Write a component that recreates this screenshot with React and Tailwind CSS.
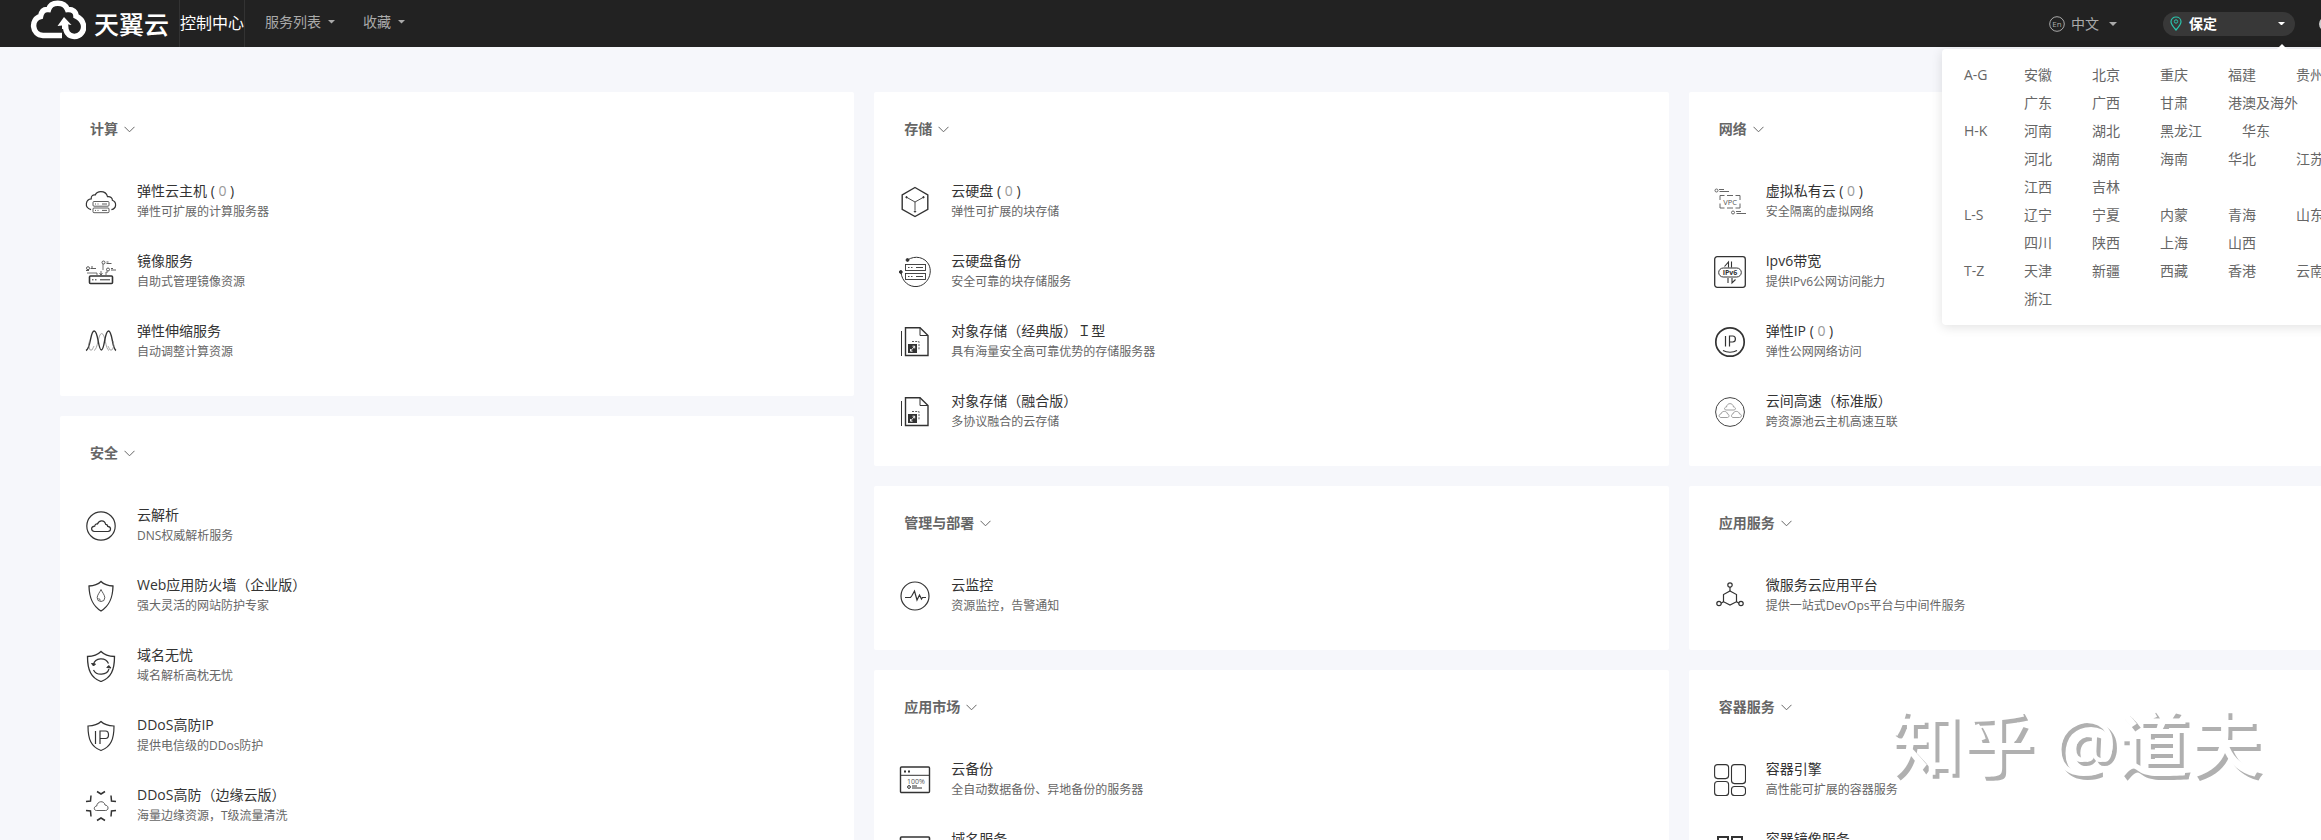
// src/App.jsx
import React from 'react';

const icons = {
  cloudServer: (
    <>
      <path d="M6 23.6C2.6 22.6 1 20 1.4 17.4c.4-2.6 2.4-4.3 4.8-4.5C6 9.800 8 8.600 10.200 9c1-2.200 3.200-3.300 5.600-3.300 3.600 0 6 2.200 6.700 5 3 -.4 5 1.300 4.900 3.600 2.200.9 3.300 2.600 3.200 4.800-.1 2.200-1.600 4-4.200 4.500" strokeWidth="1.200" />
      <g strokeWidth="0.800">
        <rect x="8" y="15.500" width="16" height="4.700" rx="1" />
        <rect x="8" y="22" width="16" height="4.700" rx="1" />
        <path d="M10 18h1M12.500 18h1M17 18h5M10 24.400h1M12.500 24.400h1M17 24.400h5" />
      </g>
    </>
  ),
  mirror: (
    <>
      <rect x="4.500" y="20" width="23" height="7.500" rx="1" strokeWidth="1.600" />
      <path d="M7 23.800h1.500M10 23.800h1.500M15 23.800h10" />
      <path d="M2 17h10v2M18 8v6M16 15v4M21 19v-3h2M14.500 17l1.500 2 1.500-2" strokeWidth="0.700" />
      <g strokeWidth="0.800">
        <circle cx="3" cy="12.200" r="1.500" />
        <circle cx="18.500" cy="6.500" r="1.500" />
        <circle cx="23" cy="13.500" r="1.500" />
        <path d="M6 11h2M5.500 12.500h5.500M1 14.500h3M21.500 6h2M21.500 7.500h5M26 12.500h2M26 14h5" />
      </g>
    </>
  ),
  scaling: (
    <>
      <path d="M9 24.500c4-1 4-17 7.700-17s3.700 16 7.300 17" stroke="#999" strokeWidth="0.900" />
      <path d="M1 24.500c5-2 4-19.500 8.200-19.500s3.800 19 7.200 19 3-19 7.100-19 3.300 17.500 7.500 19.500" strokeWidth="1.400" />
      <path d="M4.500 15l-1 4 1.500 5h2l2-4M28 15l1 5-2 4h-2l-2-4" stroke="#888" strokeWidth="0.700" />
    </>
  ),
  dns: (
    <>
      <circle cx="16" cy="16" r="14.200" strokeWidth="1.200" />
      <path d="M9.500 21.500c-3.800-.3-4-5 .2-5.400.3-2 1.700-2.400 2.800-2.100 1.600-4.400 7-4.200 8.200.3 1.500 0 2 .9 2 2.100 4 .5 3.500 4.900.3 5.100z" strokeWidth="1.200" />
    </>
  ),
  waf: (
    <>
      <path d="M16 1.500c3 3 7 4.300 12 4.500-.3 13-4 20-12 25C8 26 4.300 19 4 6c5-.2 9-1.500 12-4.500z" strokeWidth="1.300" />
      <path d="M16 9.500c1 2.500 3.800 5.500 3.800 8.200a3.800 3.800 0 0 1-7.600 0c0-2.700 2.800-5.700 3.800-8.200z" strokeWidth="0.800" />
      <path d="M13.800 18a2.200 2.200 0 0 0 2 2.200" strokeWidth="0.700" />
    </>
  ),
  shieldSync: (
    <>
      <path d="M16 1.500c3 3 8 4.800 13.500 5C29.500 20 26 28 16 31.500 6 28 2.500 20 2.500 6.500 8 6.300 13 4.500 16 1.500z" strokeWidth="1.300" />
      <path d="M8.500 14.500c1.500-7 12-7.500 15-1M24 19c-2 6.500-12.500 7-15.500 1" strokeWidth="1.200" />
      <path d="M6.500 13.500l2 2.500 2-2zM26 18l-2.200-2.500-2 2z" fill="currentColor" />
    </>
  ),
  shieldIp: (
    <>
      <path d="M16 1.500c3 3 8 4.300 13 4.500C29 19 26 27 16 30.500 6 27 3 19 3 6c5-.2 10-1.500 13-4.500z" strokeWidth="1.200" />
      <path d="M10.500 11v13M15 24V11h5.500c4 0 4 7.500 0 7.500H15" strokeWidth="1.200" />
    </>
  ),
  ddosEdge: (
    <>
      <path d="M12 1.500l4 2.500 4-2.500M12 30.500l4-2.500 4 2.500M6 5.500L5.500 11 1 11.500M26 5.500l.5 5.500 4.500.5M6 26.500L5.500 21 1 20.500M26 26.500l.5-5.500 4.500-.5" strokeWidth="1.500" />
      <path d="M11.500 20.500c-3 0-3-4.200.2-4.500.5-5 7.300-6 8.300-1 4 .3 4 5.500.5 5.500z" strokeWidth="0.800" />
    </>
  ),
  cube: (
    <>
      <path d="M16 1.500l12.800 7.300v14.500L16 30.500 3.200 23.300V8.800z" strokeWidth="1.400" />
      <path d="M8 11.500l8 4.500 8-4.500M16 16v8" strokeWidth="0.900" />
      <circle cx="7.500" cy="11.200" r="0.700" fill="currentColor" />
      <circle cx="24.500" cy="11.200" r="0.700" fill="currentColor" />
      <circle cx="16" cy="25.500" r="0.700" fill="currentColor" />
    </>
  ),
  diskBackup: (
    <>
      <path d="M8.500 4C16-1 26 1 30 9c4 9-2 20.500-12 21.500-8 .8-15-5-16-14" strokeWidth="1" />
      <circle cx="8.500" cy="4" r="1.400" fill="currentColor" />
      <circle cx="1.800" cy="16" r="1.400" fill="currentColor" />
      <g strokeWidth="0.900">
        <rect x="6.500" y="8.500" width="20" height="6" />
        <rect x="6.500" y="17.500" width="20" height="6" />
        <path d="M9 11.500h1.500M12 11.500h1.500M17 11.500h7M9 20.500h1.500M12 20.500h1.500M17 20.500h7" />
      </g>
    </>
  ),
  objectFile: (
    <>
      <path d="M6.500 1.800H21l8 7.700v20H6.500z" strokeWidth="1.400" />
      <path d="M21 1.800v7.700h8M2.500 5v25" strokeWidth="1" />
      <rect x="9" y="18" width="9" height="9" fill="currentColor" stroke="none" />
      <path d="M11.500 25l4-4.500M11.500 23v2.200h2M13.500 20.200h2.200v2.200" stroke="#fff" strokeWidth="0.900" />
      <path d="M13 15.500h7v9" strokeDasharray="2 1.200" strokeWidth="0.800" />
    </>
  ),
  monitor: (
    <>
      <circle cx="16" cy="16" r="14" strokeWidth="1.200" />
      <path d="M6 17.500h5.500l1.500-2 2.500-4.500 2.500 9 2.500-5 2 4 1-1.500H27" strokeWidth="1.200" />
    </>
  ),
  cloudBackup: (
    <>
      <rect x="1.500" y="3" width="29" height="25.500" rx="1" strokeWidth="1.400" />
      <path d="M1.500 11.300h29" />
      <path d="M5 7.500h2M9 7.500h2" strokeWidth="1.800" />
      <text x="8" y="19.500" fontSize="7" fill="#555" stroke="none">100%</text>
      <circle cx="10" cy="23" r="1.400" />
      <path d="M13 22h5M13 24h10" />
    </>
  ),
  domain: (
    <>
      <rect x="1.500" y="3" width="29" height="25.500" rx="1" strokeWidth="1.600" />
      <path d="M1.500 11.300h29" />
    </>
  ),
  vpc: (
    <g stroke="#666">
      <path d="M6 14V9.500h4.500M13 9.500h6M21.500 9.500H26V14M6 17.500V22h4.500M13 22h6M21.500 22H26v-4.500" />
      <text x="9.300" y="18.700" fontSize="7.500" fill="#555" stroke="none">VPC</text>
      <circle cx="2.500" cy="4.500" r="1.500" />
      <path d="M5 3.500h5M5.500 5.500H15M22 25.500h5M22.500 27.500H32" />
      <circle cx="19" cy="26.500" r="1.500" />
    </g>
  ),
  ipv6: (
    <>
      <rect x="0.700" y="0.700" width="30.600" height="30.600" rx="2.500" strokeWidth="1.300" />
      <rect x="4.700" y="12" width="22.600" height="9" rx="4.500" />
      <text x="16" y="19.300" fontSize="7" fontWeight="700" textAnchor="middle" fill="currentColor" stroke="none">IPv6</text>
      <path d="M10.500 10.500l4-4.500v5.500M17.500 5.500v6M14 22v5M18 22v5l3.500-3.500" strokeWidth="1.100" />
    </>
  ),
  eip: (
    <>
      <circle cx="16" cy="16" r="14.200" strokeWidth="1.700" />
      <path d="M11.500 10v10.500M15.500 20.500V10h3.200c3.600 0 3.600 6 0 6h-3.200M9 24.500c4 2.300 10 2.300 14 0" strokeWidth="1.200" />
    </>
  ),
  cloudLink: (
    <g stroke="#888">
      <circle cx="16" cy="16" r="14.400" stroke="#444" />
      <path d="M12 14c-2 0-2-3 .5-3 .5-4.500 6.500-4.500 7 0 2.500 0 2.500 3 .5 3zM7 21.500c-2.500 0-2.500-3.500 0-3.500.5-3.500 6-3.500 6.500 0 2 0 2 3.500 0 3.500zM19 21.500c-2 0-2-3.500 0-3.500.5-3.500 6-3.500 6.500 0 2.500 0 2.500 3.500 0 3.500z" strokeWidth="0.800" />
    </g>
  ),
  microservice: (
    <>
      <path d="M16 11l6.500 3.500v7.200L16 25l-6.500-3.300v-7.200z" strokeWidth="1.200" />
      <path d="M16 11V7M9.500 21.700l-2.500 1.500M22.500 21.700l2.500 1.500" strokeWidth="1.200" />
      <circle cx="16" cy="5" r="2.200" strokeWidth="1.200" />
      <circle cx="5" cy="23.500" r="2.200" strokeWidth="1.200" />
      <circle cx="27" cy="23.500" r="2.200" strokeWidth="1.200" />
    </>
  ),
  container: (
    <g strokeWidth="1.100">
      <rect x="0.600" y="0.600" width="14" height="14" rx="3" />
      <rect x="17.500" y="0.600" width="14" height="19" rx="3" />
      <rect x="0.600" y="17.500" width="14" height="14" rx="3" />
      <rect x="17.500" y="22.500" width="14" height="9" rx="3" />
    </g>
  ),
  containerImage: (
    <g strokeWidth="2">
      <rect x="4" y="3" width="10" height="10" />
      <rect x="18" y="3" width="10" height="10" />
      <rect x="4" y="17" width="10" height="10" />
      <rect x="18" y="17" width="10" height="10" />
    </g>
  ),
};

const columns = [
  [
    {
      title: '计算',
      items: [
        { icon: 'cloudServer', name: '弹性云主机', count: 0, desc: '弹性可扩展的计算服务器' },
        { icon: 'mirror', name: '镜像服务', desc: '自助式管理镜像资源' },
        { icon: 'scaling', name: '弹性伸缩服务', desc: '自动调整计算资源' },
      ],
    },
    {
      title: '安全',
      items: [
        { icon: 'dns', name: '云解析', desc: 'DNS权威解析服务' },
        { icon: 'waf', name: 'Web应用防火墙（企业版）', desc: '强大灵活的网站防护专家' },
        { icon: 'shieldSync', name: '域名无忧', desc: '域名解析高枕无忧' },
        { icon: 'shieldIp', name: 'DDoS高防IP', desc: '提供电信级的DDos防护' },
        { icon: 'ddosEdge', name: 'DDoS高防（边缘云版）', desc: '海量边缘资源，T级流量清洗' },
      ],
    },
  ],
  [
    {
      title: '存储',
      items: [
        { icon: 'cube', name: '云硬盘', count: 0, desc: '弹性可扩展的块存储' },
        { icon: 'diskBackup', name: '云硬盘备份', desc: '安全可靠的块存储服务' },
        { icon: 'objectFile', name: '对象存储（经典版）Ｉ型', desc: '具有海量安全高可靠优势的存储服务器' },
        { icon: 'objectFile', name: '对象存储（融合版）', desc: '多协议融合的云存储' },
      ],
    },
    {
      title: '管理与部署',
      items: [{ icon: 'monitor', name: '云监控', desc: '资源监控，告警通知' }],
    },
    {
      title: '应用市场',
      items: [
        { icon: 'cloudBackup', name: '云备份', desc: '全自动数据备份、异地备份的服务器' },
        { icon: 'domain', name: '域名服务' },
      ],
    },
  ],
  [
    {
      title: '网络',
      items: [
        { icon: 'vpc', name: '虚拟私有云', count: 0, desc: '安全隔离的虚拟网络' },
        { icon: 'ipv6', name: 'Ipv6带宽', desc: '提供IPv6公网访问能力' },
        { icon: 'eip', name: '弹性IP', count: 0, desc: '弹性公网网络访问' },
        { icon: 'cloudLink', name: '云间高速（标准版）', desc: '跨资源池云主机高速互联' },
      ],
    },
    {
      title: '应用服务',
      items: [{ icon: 'microservice', name: '微服务云应用平台', desc: '提供一站式DevOps平台与中间件服务' }],
    },
    {
      title: '容器服务',
      items: [
        { icon: 'container', name: '容器引擎', desc: '高性能可扩展的容器服务' },
        { icon: 'containerImage', name: '容器镜像服务' },
      ],
    },
  ],
];

const regions = [
  { label: 'A-G', rows: [['安徽', '北京', '重庆', '福建', '贵州'], ['广东', '广西', '甘肃', '港澳及海外']] },
  { label: 'H-K', rows: [['河南', '湖北', '黑龙江', '华东'], ['河北', '湖南', '海南', '华北', '江苏'], ['江西', '吉林']] },
  { label: 'L-S', rows: [['辽宁', '宁夏', '内蒙', '青海', '山东'], ['四川', '陕西', '上海', '山西']] },
  { label: 'T-Z', rows: [['天津', '新疆', '西藏', '香港', '云南'], ['浙江']] },
];

const Caret = ({ className }) => (
  <svg className={className} viewBox="0 0 8 4" fill="currentColor" aria-hidden="true">
    <path d="M0 0h8L4 4z" />
  </svg>
);

const Logo = () => (
  <a href="#" className="flex items-start gap-2 text-white">
    <svg className="h-10 w-14" viewBox="0 0 56 40" fill="none" stroke="currentColor" strokeWidth="5.500" aria-hidden="true">
      <path d="M32 35.500H13C1.500 35 .5 19 10.500 16.500 11.500 10.500 14.500 9 18.500 9.500 21 1.500 34 1 37.500 9.500c5.500-.5 8.500 2.500 8.500 6.500 8 4 9.500 12 5.500 17-3.500 4.500-11 4.500-14 0-1.500-2-2-4-2-8" />
      <path d="M34 17l7.500 8-3.500-.5V29h-6v-3.500L27.500 26z" fill="currentColor" stroke="none" />
    </svg>
    <span className="pt-2 text-[25px] leading-8 font-medium">天翼云</span>
  </a>
);

const Header = () => (
  <header className="relative flex h-[47px] items-center justify-between bg-[#222] pl-[30px]">
    <div className="flex h-full items-start">
      <Logo />
      <a href="#" className="ml-2.5 flex h-full w-[66px] items-center justify-center border-x border-[#333] pb-0.5 text-base text-white">
        控制中心
      </a>
      <button className="ml-5 flex h-11 items-center gap-[7px] text-sm text-[#aaa]">
        服务列表
        <Caret className="w-[7px]" />
      </button>
      <button className="ml-7 flex h-11 items-center gap-[7px] text-sm text-[#aaa]">
        收藏
        <Caret className="w-[7px]" />
      </button>
    </div>

    <div className="flex items-center">
      <button className="flex items-center gap-1.5 text-sm text-[#aaa]">
        <svg className="h-4 w-4" viewBox="0 0 16 16" fill="none" stroke="currentColor" aria-hidden="true">
          <circle cx="8" cy="8" r="7.300" />
          <text x="8" y="10.800" fontSize="8" textAnchor="middle" fill="currentColor" stroke="none">En</text>
        </svg>
        中文
        <Caret className="ml-1 w-2" />
      </button>
      <div className="relative ml-[46px]">
        <button className="flex h-6 w-[132px] items-center rounded-full bg-[#383838] pr-2.5 pl-[7px] text-sm font-bold text-white">
          <svg className="mr-[7px] h-[15px] w-3" viewBox="0 0 12 15" fill="none" stroke="#2bc4ad" aria-hidden="true">
            <path d="M6 14C3 10.500 1 8.300 1 5.700 1 3 3.200 1 6 1s5 2 5 4.700C11 8.300 9 10.500 6 14z" strokeWidth="1.200" />
            <circle cx="6" cy="5.500" r="1.700" />
          </svg>
          保定
          <Caret className="ml-auto w-[7px]" />
        </button>
        <RegionMenu />
      </div>
      <button className="-mr-3 ml-6 h-3.5 w-3.5 rounded-full border-2 border-[#ccc]" aria-label="消息" />
    </div>
  </header>
);

const RegionMenu = () => (
  <div className="absolute top-[37px] left-[-221px] z-10 w-[448px] rounded-sm bg-white py-3 pl-[22px] text-sm text-[#666] shadow-[0_2px_12px_rgba(0,0,0,0.12)]">
    <span className="absolute -top-[5px] left-[335px] border-x-[5px] border-b-[5px] border-x-transparent border-b-white" />
    {regions.map((group) => (
      <div key={group.label} className="flex">
        <span className="w-[60px] leading-7">{group.label}</span>
        <div>
          {group.rows.map((row, index) => (
            <div key={index} className="flex h-7 gap-10 whitespace-nowrap">
              {row.map((region) => (
                <button key={region}>{region}</button>
              ))}
            </div>
          ))}
        </div>
      </div>
    ))}
  </div>
);

const ServiceItem = ({ item }) => (
  <a href="#" className="flex h-[70px] items-start gap-5 px-[25px]">
    <svg className="mt-[19px] h-8 w-8 shrink-0 text-[#333]" viewBox="0 0 32 32" fill="none" stroke="currentColor" aria-hidden="true">
      {icons[item.icon]}
    </svg>
    <div className="pt-[13px]">
      <h3 className="text-sm leading-[21px] text-[#333]">
        {item.name}
        {item.count !== undefined && (
          <>
            {' ( '}
            <span className="text-[#999]">{item.count}</span>
            {' )'}
          </>
        )}
      </h3>
      <p className="text-xs leading-[21px] text-[#666]">{item.desc}</p>
    </div>
  </a>
);

const ServiceCard = ({ card }) => (
  <section className="rounded-xs bg-white pt-[25px] pb-[19px]">
    <h2 className="mb-[26px] pl-[30px] text-sm leading-6 font-bold text-[#666]">
      <button className="flex items-center gap-1.5">
        {card.title}
        <svg className="h-[7px] w-[11px]" viewBox="0 0 11 7" fill="none" stroke="#666" aria-hidden="true">
          <path d="M0.500 0.800l5 5 5-5" />
        </svg>
      </button>
    </h2>
    {card.items.map((item) => (
      <ServiceItem key={item.name} item={item} />
    ))}
  </section>
);

const App = () => {
  return (
    <div className="relative h-screen overflow-hidden bg-[#f6f7fb] font-['Open_Sans','Noto_Sans_CJK_SC',sans-serif]">
      <Header />

      {/* Service columns, the last one runs past the right edge */}
      <main className="grid w-[calc(100%+222px)] grid-cols-3 items-start gap-5 px-[60px] pt-[45px]">
        {columns.map((cards, index) => (
          <div key={index} className="flex flex-col gap-5">
            {cards.map((card) => (
              <ServiceCard key={card.title} card={card} />
            ))}
          </div>
        ))}
      </main>

      <div className="pointer-events-none absolute right-[60px] bottom-[50px] text-[72px] leading-[96px] font-medium whitespace-nowrap text-white [text-shadow:4px_4px_0_#b0b0b0]">
        知乎 @道夫
      </div>
    </div>
  );
};

export default App;
